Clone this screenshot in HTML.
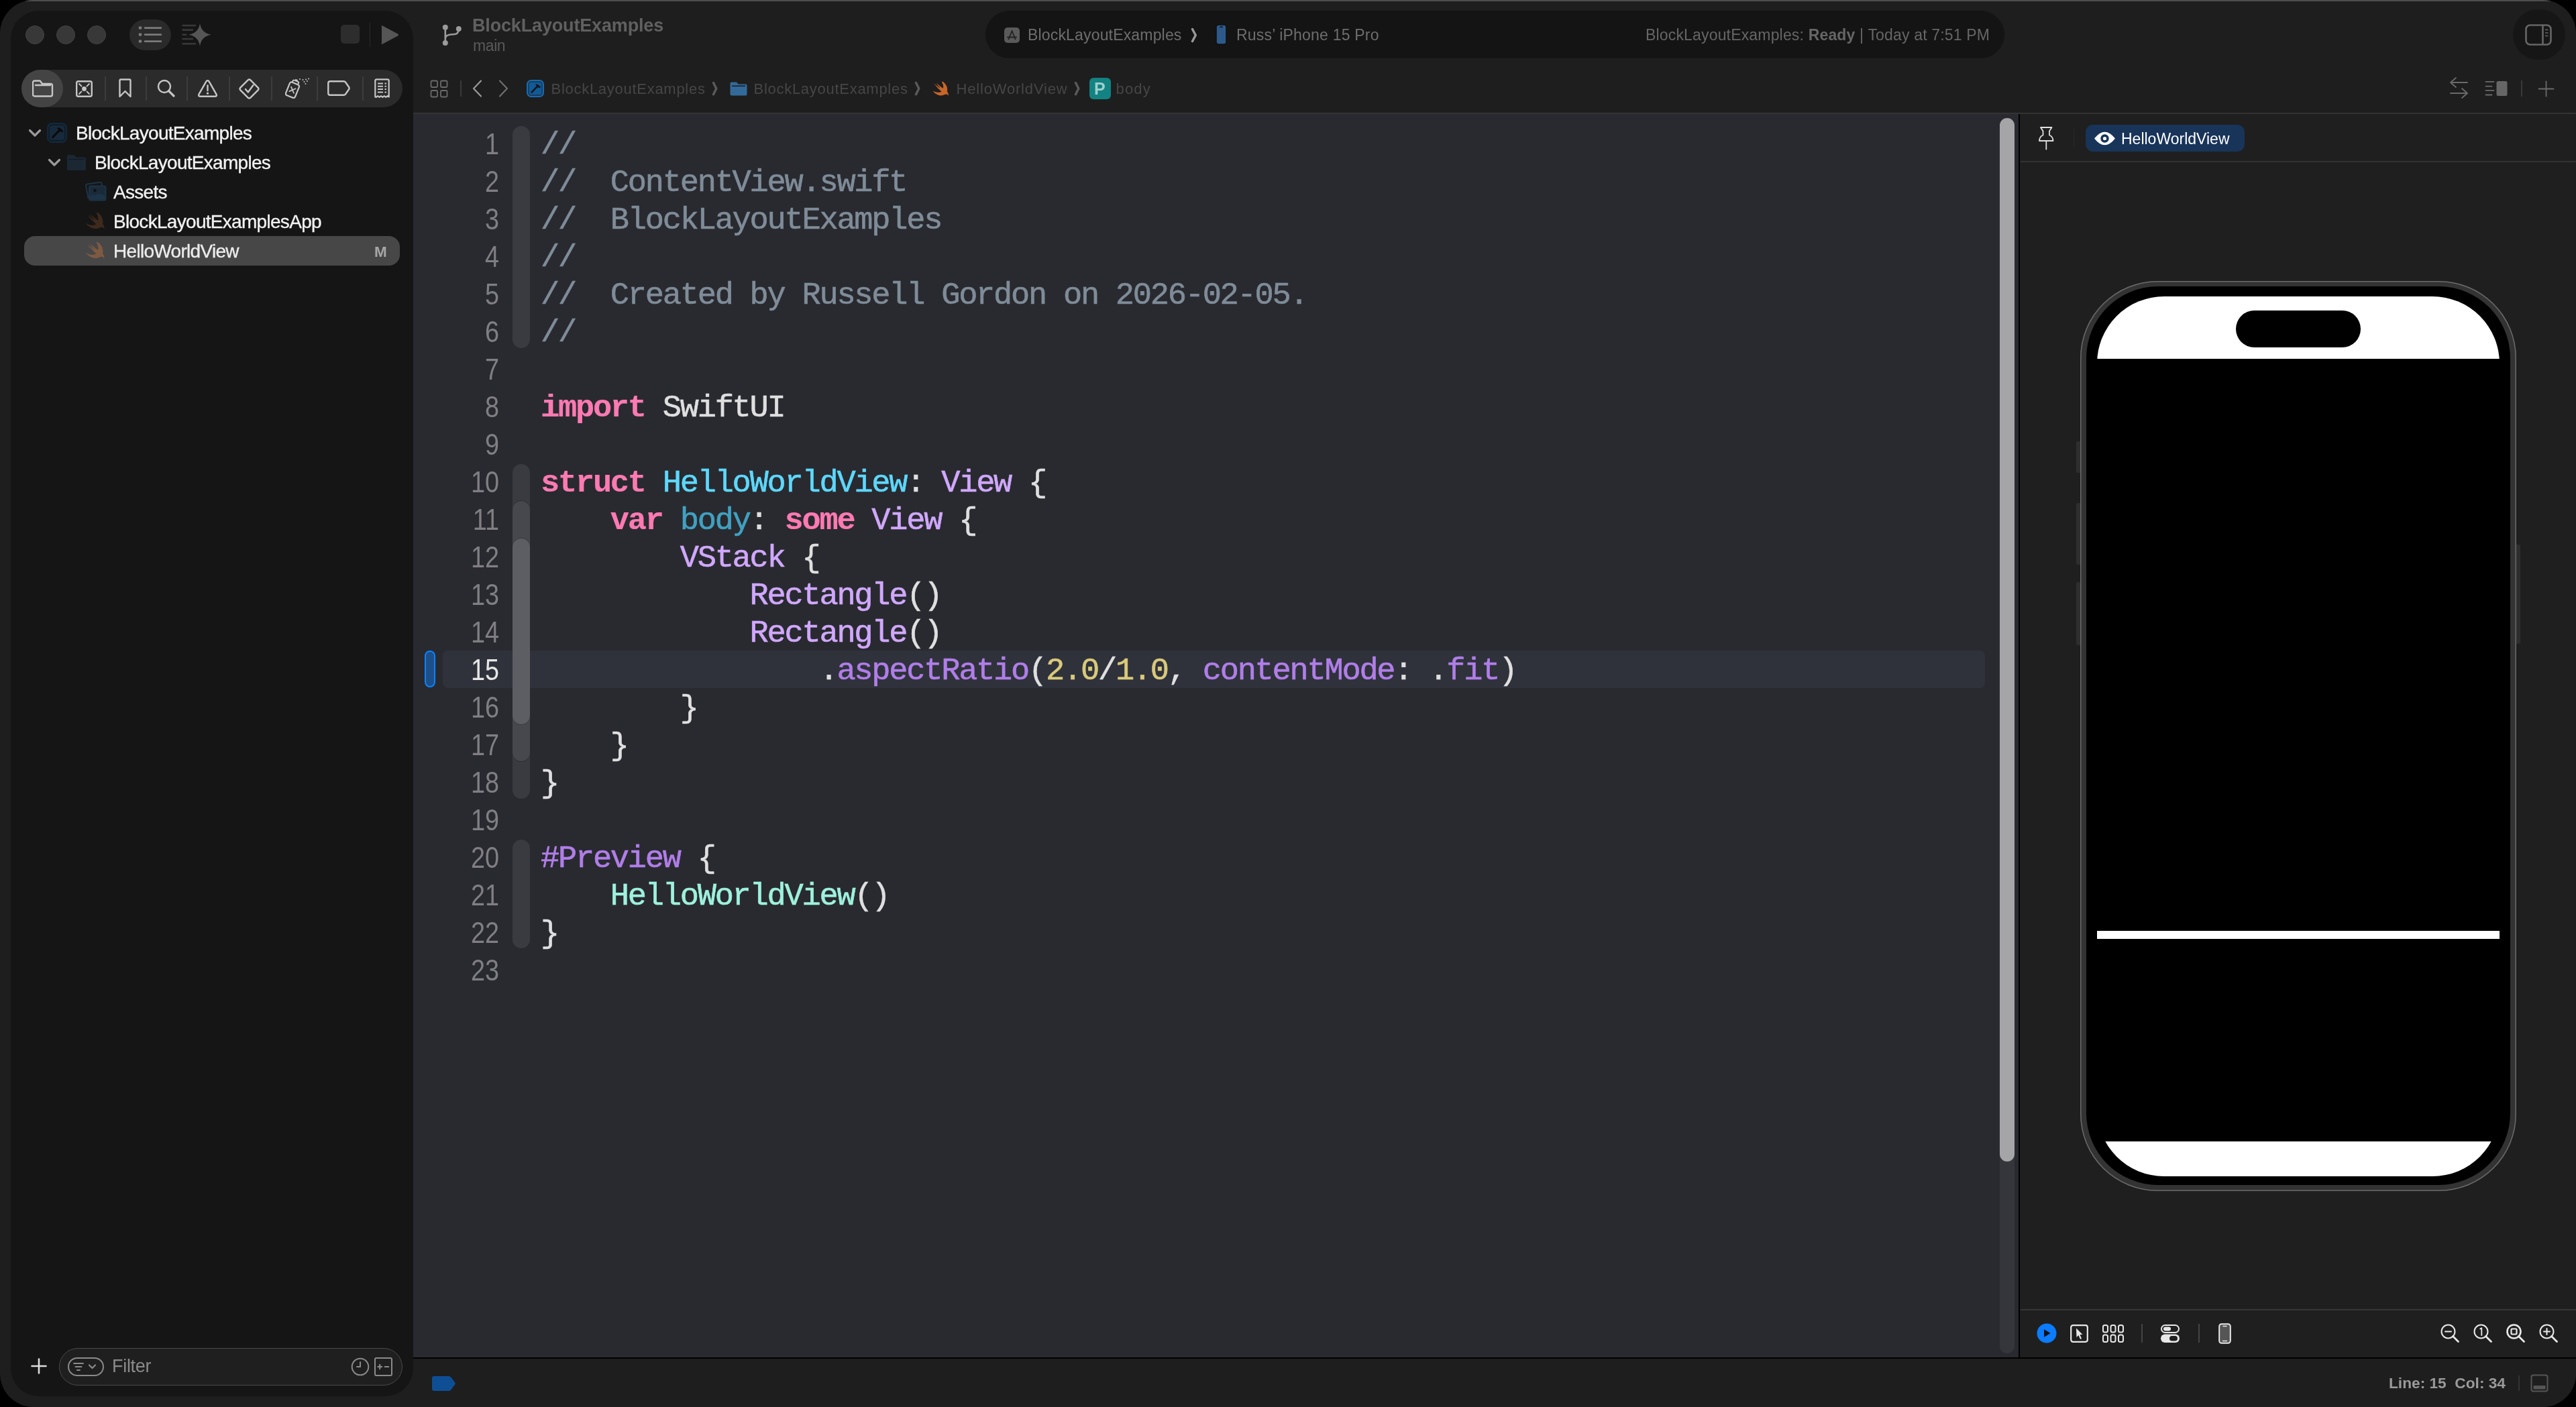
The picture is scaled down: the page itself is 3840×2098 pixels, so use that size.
<!DOCTYPE html>
<html><head><meta charset="utf-8">
<style>
*{margin:0;padding:0;box-sizing:border-box}
html,body{width:3840px;height:2098px;overflow:hidden;background:#000}
body{font-family:"Liberation Sans",sans-serif;position:relative}
.a{position:absolute}
#win{position:absolute;left:0;top:0;width:3840px;height:2098px;border-radius:50px;background:#1e1e1e;overflow:hidden;will-change:transform}
#topline{left:0;top:0;width:3840px;height:2px;background:#4d4d4d}
#side{left:16px;top:16px;width:600px;height:2066px;border-radius:42px;background:#151515}
.tl{width:28px;height:28px;border-radius:50%;background:#383838;border:1px solid #444;top:38px}
#navbar{left:32px;top:104px;width:568px;height:56px;border-radius:28px;background:#2b2b2b}
#navsel{left:32px;top:104px;width:62px;height:56px;border-radius:28px;background:#444}
.nsep{top:114px;width:2px;height:36px;background:#3c3c3c}
.row{left:24px;height:44px;font-size:26.7px;color:#f2f2f2;white-space:nowrap}
#editor{left:616px;top:170px;width:2393px;height:1854px;background:#292a30;overflow:hidden}
#tbline{left:616px;top:168px;width:3224px;height:2px;background:#333}
#status{left:616px;top:2026px;width:3224px;height:72px;background:#1e1e1e}
#botline{left:616px;top:2024px;width:3224px;height:2px;background:#000}
#preview{left:3011px;top:170px;width:828px;height:1854px;background:#1f1f1f}
#vsep{left:3009px;top:170px;width:2px;height:1854px;background:#000}
.code{font-family:"Liberation Mono",monospace;font-size:47px;letter-spacing:-2.24px;white-space:pre;color:#dfdfe0;-webkit-text-stroke:0.6px currentColor}
.ln{font-family:"Liberation Sans",sans-serif;font-size:43.5px;color:#7f7f83;text-align:right;width:120px;left:624px;margin-top:-2px;transform:scaleX(0.87);transform-origin:100% 50%}
.k{color:#ff7ab2;font-weight:bold;-webkit-text-stroke:0.2px currentColor}
.t{color:#d0a8ff}
.td{color:#5dd8ff}
.od{color:#41a1c0}
.fn{color:#b07ee8}
.num{color:#d9c97c}
.cm{color:#7f8c98}
.pc{color:#9ef1dd}
</style></head><body>
<div id="win">
  <div class="a" id="topline"></div>
  <!-- Sidebar -->
  <div class="a" id="side"></div>
  <div class="a tl" style="left:38px"></div>
  <div class="a tl" style="left:84px"></div>
  <div class="a tl" style="left:130px"></div>
  <div class="a" style="left:193px;top:29px;width:62px;height:46px;border-radius:23px;background:#2a2a2a"></div>
  <div class="a" style="left:508px;top:37px;width:28px;height:28px;border-radius:5px;background:#2d2d2d"></div>
  <div class="a" style="left:551px;top:34px;width:1px;height:36px;background:#2a2a2a"></div>
  <svg class="a" style="left:566px;top:36px" width="30" height="32" viewBox="0 0 30 32"><path d="M3 3 Q2 1.5 4 2.3 L27 14.5 Q29 16 27 17.5 L4 29.7 Q2 30.5 3 29 Z" fill="#555"/></svg>
  <div class="a" id="navbar"></div>
  <div class="a" id="navsel"></div>
  <div class="a nsep" style="left:156px"></div>
  <div class="a nsep" style="left:217px"></div>
  <div class="a nsep" style="left:278px"></div>
  <div class="a nsep" style="left:341px"></div>
  <div class="a nsep" style="left:404px"></div>
  <div class="a nsep" style="left:472px"></div>
  <div class="a nsep" style="left:540px"></div>


  <!-- sidebar toolbar icons -->
  <svg class="a" style="left:205px;top:38px" width="38" height="28" viewBox="0 0 38 28"><g fill="#7a7a7a"><circle cx="4" cy="3.6" r="2.4"/><circle cx="4" cy="13.6" r="2.4"/><circle cx="4" cy="23.6" r="2.4"/></g><g stroke="#7a7a7a" stroke-width="2.6" stroke-linecap="round"><path d="M11 3.6H35M11 13.6H35M11 23.6H35"/></g></svg>
  <svg class="a" style="left:270px;top:33px" width="48" height="38" viewBox="0 0 48 38"><g stroke="#383838" stroke-width="2.6" stroke-linecap="round"><path d="M2.5 5H21M2.5 11.6H17M2.5 18.8H7.5M2.5 25H17M2.5 32.2H21"/></g><path d="M28 1.8Q30 16.3 45 18.8Q30 21.3 28 35.8Q26 21.3 11 18.8Q26 16.3 28 1.8Z" fill="#555"/></svg>
  <!-- nav icons -->
  <svg class="a" style="left:48px;top:119px" width="32" height="26" viewBox="0 0 32 26"><g fill="none" stroke="#c6c6c6" stroke-width="2.4" stroke-linejoin="round"><path d="M3.5 24.5H27.5A2.5 2.5 0 0 0 30 22V8.5A2.5 2.5 0 0 0 27.5 6H15L12.3 2.2A1.5 1.5 0 0 0 11 1.5H3.5A2.5 2.5 0 0 0 1 4V22A2.5 2.5 0 0 0 3.5 24.5Z"/><path d="M5 8H27" stroke-linecap="round"/></g></svg>
  <svg class="a" style="left:113px;top:120px" width="25" height="25" viewBox="0 0 25 25"><rect x="1.2" y="1.2" width="22.6" height="22.6" rx="2.5" fill="none" stroke="#c6c6c6" stroke-width="2.4"/><circle cx="12.5" cy="12.5" r="3.4" fill="#c6c6c6"/><g stroke="#c6c6c6" stroke-width="1.8" stroke-linecap="round"><path d="M5 5L8.5 8.5M20 5L16.5 8.5M5 20L8.5 16.5M20 20L16.5 16.5"/></g></svg>
  <svg class="a" style="left:177px;top:117px" width="19" height="29" viewBox="0 0 19 29"><path d="M3 1.5H16A1.5 1.5 0 0 1 17.5 3V27L9.5 19L1.5 27V3A1.5 1.5 0 0 1 3 1.5Z" fill="none" stroke="#c6c6c6" stroke-width="2.4" stroke-linejoin="round"/></svg>
  <svg class="a" style="left:234px;top:118px" width="27" height="27" viewBox="0 0 27 27"><circle cx="11" cy="11" r="9" fill="none" stroke="#c6c6c6" stroke-width="2.4"/><path d="M17.5 17.5L25 25" stroke="#c6c6c6" stroke-width="3.2" stroke-linecap="round"/></svg>
  <svg class="a" style="left:295px;top:119px" width="29" height="26" viewBox="0 0 29 26"><path d="M12.3 2.6Q14.5 -0.6 16.7 2.6L27.4 21.4Q29 24.8 25 24.8H4Q0 24.8 1.6 21.4Z" fill="none" stroke="#c6c6c6" stroke-width="2.4" stroke-linejoin="round"/><path d="M14.5 8.5V16" stroke="#c6c6c6" stroke-width="2.4" stroke-linecap="round"/><circle cx="14.5" cy="20.2" r="1.6" fill="#c6c6c6"/></svg>
  <svg class="a" style="left:356px;top:117px" width="31" height="31" viewBox="0 0 31 31"><path d="M13.6 2.4Q15.5 0.7 17.4 2.4L28.6 13.6Q30.3 15.5 28.6 17.4L17.4 28.6Q15.5 30.3 13.6 28.6L2.4 17.4Q0.7 15.5 2.4 13.6Z" fill="none" stroke="#c6c6c6" stroke-width="2.4"/><path d="M10 16L13.8 20.5L21.5 10" fill="none" stroke="#c6c6c6" stroke-width="2.4" stroke-linecap="round" stroke-linejoin="round"/></svg>
  <svg class="a" style="left:425px;top:115px" width="37" height="32" viewBox="0 0 37 32"><g transform="rotate(22 12 18)"><rect x="4" y="9" width="15" height="21" rx="3" fill="none" stroke="#c6c6c6" stroke-width="2.2"/><path d="M7 9V6.5Q7 5 8.5 5H14.5Q16 5 16 6.5V9" fill="none" stroke="#c6c6c6" stroke-width="2"/><path d="M9.5 3.5H13.5" stroke="#c6c6c6" stroke-width="2"/><path d="M8 16L15 23M15 16L8 23" stroke="#c6c6c6" stroke-width="1.8" stroke-linecap="round"/></g><g fill="#c6c6c6"><circle cx="22" cy="3" r="1"/><circle cx="26.5" cy="4" r="1"/><circle cx="31" cy="3.5" r="1"/><circle cx="35" cy="2.5" r="1"/><circle cx="28.5" cy="7" r="1"/><circle cx="33" cy="6" r="1"/><circle cx="30.5" cy="10" r="1"/></g></svg>
  <svg class="a" style="left:488px;top:120px" width="34" height="23" viewBox="0 0 34 23"><path d="M4 1.3H24.5Q26 1.3 27 2.5L32.2 10Q33 11.5 32.2 13L27 20.5Q26 21.7 24.5 21.7H4Q1.3 21.7 1.3 19V4Q1.3 1.3 4 1.3Z" fill="none" stroke="#c6c6c6" stroke-width="2.4" stroke-linejoin="round"/></svg>
  <svg class="a" style="left:558px;top:117px" width="23" height="30" viewBox="0 0 23 30"><path d="M1.3 27.5V3.5Q1.3 1.3 3.5 1.3H19.5Q21.7 1.3 21.7 3.5V27.5L19.6 26.2L17.2 27.8L14.8 26.2L12.4 27.8L10 26.2L7.6 27.8L5.2 26.2L2.8 27.8Z" fill="none" stroke="#c6c6c6" stroke-width="2.2" stroke-linejoin="round"/><g stroke="#c6c6c6" stroke-width="2"><path d="M5 7.5H13M5 11.8H13M5 16.1H13M5 20.4H13M15.5 7.5H18M15.5 11.8H18M15.5 16.1H18M15.5 20.4H18"/></g></svg>

  <!-- tree -->
  <div class="a" style="left:36px;top:352px;width:560px;height:44px;border-radius:16px;background:#474747"></div>
  <svg class="a" style="left:42px;top:192px" width="20" height="13" viewBox="0 0 20 13"><path d="M2.5 2.5L10 10L17.5 2.5" fill="none" stroke="#9a9a9a" stroke-width="3.2" stroke-linecap="round" stroke-linejoin="round"/></svg>
  <svg class="a" style="left:71px;top:236px" width="20" height="13" viewBox="0 0 20 13"><path d="M2.5 2.5L10 10L17.5 2.5" fill="none" stroke="#9a9a9a" stroke-width="3.2" stroke-linecap="round" stroke-linejoin="round"/></svg>
  <svg class="a" style="left:70px;top:183px" width="30" height="30" viewBox="0 0 30 30"><rect x="1.3" y="1.3" width="27.4" height="27.4" rx="6.5" fill="#10171e" stroke="#13283d" stroke-width="2.6"/><rect x="3.9" y="3.9" width="22.2" height="22.2" rx="3.8" fill="#172a3c"/><path d="M8.6 21.6L18 11.8" stroke="#0b0b0b" stroke-width="3" stroke-linecap="round"/><path d="M14.6 8Q17.6 6.4 20.4 8.6L24.6 12.6L22.7 14.7L20.4 12.8L17.8 14.7L15.7 12.3L17.6 10.7Q16.4 9 14.6 8Z" fill="#0b0b0b"/></svg>
  <svg class="a" style="left:99px;top:230px" width="30" height="25" viewBox="0 0 30 25"><path d="M3 24H27Q29 24 29 22V6.5Q29 4.5 27 4.5H14.5L12 1.5Q11.5 1 10.5 1H3Q1 1 1 3V22Q1 24 3 24Z" fill="#1b2834"/><path d="M4 7.5H26" stroke="#111a22" stroke-width="1.6" stroke-linecap="round"/></svg>
  <svg class="a" style="left:125px;top:271px" width="34" height="29" viewBox="0 0 34 29"><path d="M6.5 25L3.2 6.3Q2.8 4 5 3.6L24 0.8Q26.2 0.6 26.6 2.8L27 6" fill="none" stroke="#1d3347" stroke-width="2"/><rect x="8" y="6.5" width="24.5" height="21" rx="2.6" fill="#1a2a38" stroke="#1d3347" stroke-width="2"/><circle cx="16.5" cy="13" r="2.3" fill="#111"/><path d="M9 26.5V22Q13 17.5 17 20.5Q22 15.5 31.5 21V26.5Z" fill="#1d3347"/></svg>
  <svg class="a" style="left:127px;top:316px" width="29" height="27" viewBox="2.5 3.2 18 17.6"><path fill="#3d2a1c" d="M13.543 3.41c4.114 2.47 6.545 7.162 5.549 11.131-.024.093-.05.181-.076.272l.002.001c2.062 2.538 1.5 5.258 1.236 4.745-1.072-2.086-3.066-1.568-4.088-1.043a6.803 6.803 0 0 1-.281.158l-.02.012-.002.002c-2.115 1.123-4.957 1.205-7.812-.022a12.568 12.568 0 0 1-5.64-4.838c.649.48 1.350.902 2.097 1.252 3.019 1.414 6.051 1.311 8.197-.002C9.651 12.73 7.101 9.670 5.146 7.191a10.628 10.628 0 0 1-1.005-1.384c2.340 2.142 6.038 4.830 7.365 5.576C8.690 8.408 6.208 4.775 7.353 5.700c3.490 3.508 6.739 5.503 6.739 5.503.107.06.19.11.257.154.07-.178.131-.36.18-.547.539-1.970-.07-4.218-1.420-6.043z"/></svg>
  <svg class="a" style="left:127px;top:360px" width="29" height="27" viewBox="2.5 3.2 18 17.6"><path fill="#7d5a43" d="M13.543 3.41c4.114 2.47 6.545 7.162 5.549 11.131-.024.093-.05.181-.076.272l.002.001c2.062 2.538 1.5 5.258 1.236 4.745-1.072-2.086-3.066-1.568-4.088-1.043a6.803 6.803 0 0 1-.281.158l-.02.012-.002.002c-2.115 1.123-4.957 1.205-7.812-.022a12.568 12.568 0 0 1-5.64-4.838c.649.48 1.350.902 2.097 1.252 3.019 1.414 6.051 1.311 8.197-.002C9.651 12.73 7.101 9.670 5.146 7.191a10.628 10.628 0 0 1-1.005-1.384c2.340 2.142 6.038 4.830 7.365 5.576C8.690 8.408 6.208 4.775 7.353 5.700c3.490 3.508 6.739 5.503 6.739 5.503.107.06.19.11.257.154.07-.178.131-.36.18-.547.539-1.970-.07-4.218-1.420-6.043z"/></svg>
  <div class="a row" style="left:113px;top:184px;line-height:30px;font-size:28px;letter-spacing:-0.7px;-webkit-text-stroke:0.35px currentColor">BlockLayoutExamples</div>
  <div class="a row" style="left:141px;top:228px;line-height:30px;font-size:28px;letter-spacing:-0.7px;-webkit-text-stroke:0.35px currentColor">BlockLayoutExamples</div>
  <div class="a row" style="left:169px;top:272px;line-height:30px;font-size:28px;letter-spacing:-0.7px;-webkit-text-stroke:0.35px currentColor">Assets</div>
  <div class="a row" style="left:169px;top:316px;line-height:30px;font-size:28px;letter-spacing:-0.7px;-webkit-text-stroke:0.35px currentColor">BlockLayoutExamplesApp</div>
  <div class="a row" style="left:169px;top:360px;line-height:30px;font-size:28px;letter-spacing:-0.7px;-webkit-text-stroke:0.35px currentColor;color:#ececec">HelloWorldView</div>
  <div class="a row" style="left:558px;top:364px;line-height:23px;font-size:22.5px;font-weight:bold;color:#a6a6a6">M</div>

  <!-- filter -->
  <svg class="a" style="left:46px;top:2025px" width="24" height="24" viewBox="0 0 24 24"><path d="M12 1.5V22.5M1.5 12H22.5" stroke="#dcdcdc" stroke-width="2.6" stroke-linecap="round"/></svg>
  <div class="a" style="left:88px;top:2010px;width:512px;height:56px;border-radius:28px;background:#1f1f1f;border:1.5px solid #4a4a4a"></div>
  <svg class="a" style="left:101px;top:2024px" width="54" height="28" viewBox="0 0 54 28"><rect x="1" y="1" width="52" height="26" rx="13" fill="none" stroke="#8a8a8a" stroke-width="2"/><g stroke="#8a8a8a" stroke-width="2" stroke-linecap="round"><path d="M9 9H23M11.5 14H20.5M14 19H18"/></g><path d="M32 11.5L36.5 16L41 11.5" fill="none" stroke="#8a8a8a" stroke-width="2.2" stroke-linecap="round" stroke-linejoin="round"/></svg>
  <div class="a" style="left:167px;top:2022px;font-size:27px;line-height:30px;color:#8a8a8a;letter-spacing:-0.3px">Filter</div>
  <svg class="a" style="left:523px;top:2024px" width="28" height="28" viewBox="0 0 28 28"><circle cx="14" cy="14" r="12.3" fill="none" stroke="#8a8a8a" stroke-width="2"/><path d="M14 7V14H9" fill="none" stroke="#8a8a8a" stroke-width="2" stroke-linecap="round" stroke-linejoin="round"/></svg>
  <svg class="a" style="left:558px;top:2024px" width="27" height="28" viewBox="0 0 27 28"><rect x="1" y="1" width="25" height="26" rx="2" fill="none" stroke="#8a8a8a" stroke-width="2"/><path d="M4.5 14H12M8.2 10V18M15 14H22" stroke="#8a8a8a" stroke-width="2"/></svg>

  <!-- Toolbar -->
  <svg class="a" style="left:656px;top:33px" width="36" height="38" viewBox="656 33 36 38"><g fill="#9b9b9b"><circle cx="663.8" cy="40.7" r="4"/><circle cx="683.8" cy="43" r="4"/><circle cx="663.8" cy="64" r="4"/></g><path d="M663.8 40.7V64M663.8 57Q664.5 52 672 51.5L678 51Q683.5 50.5 683.8 43" fill="none" stroke="#9b9b9b" stroke-width="2.6"/></svg>
  <div class="a" style="left:704px;top:21.14px;font-size:27px;line-height:35px;color:#606060;font-weight:700;letter-spacing:-0.16px;white-space:nowrap;">BlockLayoutExamples</div>
  <div class="a" style="left:705px;top:53.03px;font-size:23px;line-height:30px;color:#5a5a5a;font-weight:400;letter-spacing:-0.4px;white-space:nowrap;">main</div>
  <div class="a" style="left:1469px;top:16px;width:1519px;height:71px;border-radius:35.5px;background:#141414"></div>
  <svg class="a" style="left:1497px;top:41px" width="23" height="23" viewBox="0 0 23 23"><rect width="23" height="23" rx="5" fill="#5a5a5a"/><g stroke="#222" stroke-width="1.8" stroke-linecap="round" fill="none"><path d="M11.5 5L6.5 17.5M11.5 5L16.5 17.5M5 14.5H18"/></g></svg>
  <div class="a" style="left:1532px;top:37.03px;font-size:23px;line-height:30px;color:#6e6e6e;font-weight:400;letter-spacing:0.17px;white-space:nowrap;">BlockLayoutExamples</div>
  <svg class="a" style="left:1775px;top:41px" width="11" height="23" viewBox="0 0 11 23"><path d="M2.5 2.5L7.3 11.5L2.5 20.5" fill="none" stroke="#9a9a9a" stroke-width="3.4" stroke-linecap="round" stroke-linejoin="round"/></svg>
  <svg class="a" style="left:1812px;top:36px" width="17" height="31" viewBox="0 0 17 31"><rect x="1" y="1" width="15" height="29" rx="3.5" fill="#2d5a8a" stroke="#111" stroke-width="1.6"/><rect x="6" y="3.5" width="5" height="1.4" rx="0.7" fill="#111"/></svg>
  <div class="a" style="left:1843px;top:37.03px;font-size:23px;line-height:30px;color:#6e6e6e;font-weight:400;letter-spacing:0.2px;white-space:nowrap;">Russ’ iPhone 15 Pro</div>
  <div class="a" style="left:2453px;top:37.03px;font-size:23px;line-height:30px;color:#666666;font-weight:400;letter-spacing:0.17px;white-space:nowrap;">BlockLayoutExamples: <b>Ready</b> | Today at 7:51 PM</div>
  <div class="a" style="left:3746px;top:14px;width:78px;height:75px;border-radius:39px;background:#161616"></div>
  <svg class="a" style="left:3764px;top:36px" width="40" height="32" viewBox="0 0 40 32"><rect x="1.5" y="1.5" width="37" height="29" rx="6" fill="none" stroke="#666" stroke-width="2.6"/><path d="M26.5 1.5V30.5" stroke="#666" stroke-width="2.6"/><path d="M30 8.5H34.5M30 13H34.5M30 17.5H34.5" stroke="#666" stroke-width="1.6"/></svg>
  <svg class="a" style="left:641px;top:119px" width="27" height="27" viewBox="0 0 27 27"><g fill="none" stroke="#6a6a6a" stroke-width="1.8"><rect x="1.5" y="1.5" width="9.5" height="9.5" rx="1.5"/><rect x="16" y="1.5" width="9.5" height="9.5" rx="1.5"/><rect x="1.5" y="16" width="9.5" height="9.5" rx="1.5"/><rect x="16" y="16" width="9.5" height="9.5" rx="1.5"/></g></svg>
  <div class="a" style="left:686px;top:120px;width:2px;height:24px;background:#3a3a3a"></div>
  <svg class="a" style="left:703px;top:118px" width="17" height="28" viewBox="0 0 17 28"><path d="M14 2.5L3 14L14 25.5" fill="none" stroke="#9a9a9a" stroke-width="2.2" stroke-linecap="round" stroke-linejoin="round"/></svg>
  <svg class="a" style="left:742px;top:118px" width="17" height="28" viewBox="0 0 17 28"><path d="M3 2.5L14 14L3 25.5" fill="none" stroke="#6e6e6e" stroke-width="2.2" stroke-linecap="round" stroke-linejoin="round"/></svg>
  <svg class="a" style="left:785px;top:119px" width="26" height="26" viewBox="0 0 26 26"><rect x="1.15" y="1.15" width="23.7" height="23.7" rx="5.5" fill="#1b2733" stroke="#1a6bb0" stroke-width="2.3"/><rect x="3.4" y="3.4" width="19.2" height="19.2" rx="3.3" fill="#115a98"/><path d="M7.6 18.6L15.6 10.2" stroke="#161616" stroke-width="2.6" stroke-linecap="round"/><path d="M12.6 7Q15.2 5.6 17.6 7.4L21.2 10.8L19.6 12.6L17.6 11L15.4 12.6L13.6 10.6L15.2 9.2Q14.2 7.8 12.6 7Z" fill="#161616"/></svg>
  <div class="a" style="left:821.5px;top:117.93px;font-size:22px;line-height:30px;color:#464646;font-weight:400;letter-spacing:0.72px;white-space:nowrap;">BlockLayoutExamples</div>
  <svg class="a" style="left:1061px;top:121px" width="10" height="22" viewBox="0 0 10 22"><path d="M2.5 2.5L6.8 11L2.5 19.8" fill="none" stroke="#5a5a5a" stroke-width="3.4" stroke-linecap="round" stroke-linejoin="round"/></svg>
  <svg class="a" style="left:1088px;top:122px" width="26" height="21" viewBox="0 0 26 21"><path d="M2.5 20.5H23.5Q25.5 20.5 25.5 18.5V5.5Q25.5 3.5 23.5 3.5H12.5L10.5 1Q10 0.5 9 0.5H2.5Q0.5 0.5 0.5 2.5V18.5Q0.5 20.5 2.5 20.5Z" fill="#336a9a"/><path d="M3.5 6.2H22.5" stroke="#1a1a1a" stroke-width="1.4" stroke-linecap="round"/></svg>
  <div class="a" style="left:1123.5px;top:117.93px;font-size:22px;line-height:30px;color:#464646;font-weight:400;letter-spacing:0.72px;white-space:nowrap;">BlockLayoutExamples</div>
  <svg class="a" style="left:1363px;top:121px" width="10" height="22" viewBox="0 0 10 22"><path d="M2.5 2.5L6.8 11L2.5 19.8" fill="none" stroke="#5a5a5a" stroke-width="3.4" stroke-linecap="round" stroke-linejoin="round"/></svg>
  <svg class="a" style="left:1389px;top:121px" width="26" height="23" viewBox="2.5 3.2 18 17.6"><path fill="#c8662a" d="M13.543 3.41c4.114 2.47 6.545 7.162 5.549 11.131-.024.093-.05.181-.076.272l.002.001c2.062 2.538 1.5 5.258 1.236 4.745-1.072-2.086-3.066-1.568-4.088-1.043a6.803 6.803 0 0 1-.281.158l-.02.012-.002.002c-2.115 1.123-4.957 1.205-7.812-.022a12.568 12.568 0 0 1-5.64-4.838c.649.48 1.350.902 2.097 1.252 3.019 1.414 6.051 1.311 8.197-.002C9.651 12.73 7.101 9.670 5.146 7.191a10.628 10.628 0 0 1-1.005-1.384c2.340 2.142 6.038 4.830 7.365 5.576C8.690 8.408 6.208 4.775 7.353 5.700c3.490 3.508 6.739 5.503 6.739 5.503.107.06.19.11.257.154.07-.178.131-.36.18-.547.539-1.970-.07-4.218-1.420-6.043z"/></svg>
  <div class="a" style="left:1425.5px;top:117.93px;font-size:22px;line-height:30px;color:#464646;font-weight:400;letter-spacing:0.82px;white-space:nowrap;">HelloWorldView</div>
  <svg class="a" style="left:1601px;top:121px" width="10" height="22" viewBox="0 0 10 22"><path d="M2.5 2.5L6.8 11L2.5 19.8" fill="none" stroke="#5a5a5a" stroke-width="3.4" stroke-linecap="round" stroke-linejoin="round"/></svg>
  <div class="a" style="left:1624px;top:116px;width:32px;height:32px;border-radius:6px;background:#138282"></div>
  <div class="a" style="left:1631px;top:116.34px;font-size:25px;line-height:32px;color:#9ccfcf;font-weight:700;letter-spacing:0px;white-space:nowrap;">P</div>
  <div class="a" style="left:1663.5px;top:117.93px;font-size:22px;line-height:30px;color:#464646;font-weight:400;letter-spacing:1.2px;white-space:nowrap;">body</div>
  <svg class="a" style="left:3650px;top:114px" width="31" height="36" viewBox="0 0 31 36"><g fill="none" stroke="#6a6a6a" stroke-width="1.8" stroke-linecap="round" stroke-linejoin="round"><path d="M28 9H3M11 2L3 9L11 16"/><path d="M3 25H28M20 18L28 25L20 32"/></g></svg>
  <svg class="a" style="left:3704px;top:120px" width="35" height="24" viewBox="0 0 35 24"><g stroke="#6a6a6a" stroke-width="1.8" stroke-linecap="round"><path d="M1.5 1.9H13.5M1.5 8.6H10.5M1.5 14.9H13.5M1.5 21.5H10.5" /></g><rect x="17.5" y="1" width="16" height="22" rx="2.5" fill="#666"/></svg>
  <div class="a" style="left:3758px;top:120px;width:2px;height:24px;background:#3a3a3a"></div>
  <svg class="a" style="left:3783px;top:120px" width="25" height="25" viewBox="0 0 25 25"><path d="M12.5 1.5V23.5M1.5 12.5H23.5" stroke="#6a6a6a" stroke-width="1.8" stroke-linecap="round"/></svg>
  <div class="a" id="tbline"></div>

  <!-- Editor -->
  <div class="a" id="editor"></div>
  <div class="a" style="left:660px;top:970px;width:2299px;height:56px;border-radius:8px;background:#2f323b"></div>
  <div class="a" style="left:633px;top:970px;width:16px;height:55px;border-radius:8px;background:#1d4f8a;border:2px solid #0a84ff"></div>
  <div class="a" style="left:764px;top:188px;width:26px;height:331px;border-radius:13px;background:#3a3b40"></div>
  <div class="a" style="left:764px;top:692px;width:26px;height:499px;border-radius:13px;background:#3a3b40"></div>
  <div class="a" style="left:764px;top:747px;width:26px;height:388px;border-radius:13px;background:#47484d;box-shadow:0 -1px 0 #2e2f33, 0 1px 0 #2e2f33"></div>
  <div class="a" style="left:764px;top:803px;width:26px;height:277px;border-radius:13px;background:#5d5e63;box-shadow:0 -1px 0 #3a3b40, 0 1px 0 #3a3b40"></div>
  <div class="a" style="left:764px;top:1252px;width:26px;height:162px;border-radius:13px;background:#3a3b40"></div>
  <div class="a" style="left:2981px;top:176px;width:22px;height:1842px;border-radius:11px;background:#35363b"></div>
  <div class="a" style="left:2981px;top:176px;width:22px;height:1556px;border-radius:11px;background:#a5a5a7"></div>
  <div class="a ln" style="top:189px;line-height:56px">1</div>
  <div class="a ln" style="top:245px;line-height:56px">2</div>
  <div class="a ln" style="top:301px;line-height:56px">3</div>
  <div class="a ln" style="top:357px;line-height:56px">4</div>
  <div class="a ln" style="top:413px;line-height:56px">5</div>
  <div class="a ln" style="top:469px;line-height:56px">6</div>
  <div class="a ln" style="top:525px;line-height:56px">7</div>
  <div class="a ln" style="top:581px;line-height:56px">8</div>
  <div class="a ln" style="top:637px;line-height:56px">9</div>
  <div class="a ln" style="top:693px;line-height:56px">10</div>
  <div class="a ln" style="top:749px;line-height:56px">11</div>
  <div class="a ln" style="top:805px;line-height:56px">12</div>
  <div class="a ln" style="top:861px;line-height:56px">13</div>
  <div class="a ln" style="top:917px;line-height:56px">14</div>
  <div class="a ln" style="top:973px;line-height:56px;color:#e6e6e6">15</div>
  <div class="a ln" style="top:1029px;line-height:56px">16</div>
  <div class="a ln" style="top:1085px;line-height:56px">17</div>
  <div class="a ln" style="top:1141px;line-height:56px">18</div>
  <div class="a ln" style="top:1197px;line-height:56px">19</div>
  <div class="a ln" style="top:1253px;line-height:56px">20</div>
  <div class="a ln" style="top:1309px;line-height:56px">21</div>
  <div class="a ln" style="top:1365px;line-height:56px">22</div>
  <div class="a ln" style="top:1421px;line-height:56px">23</div>
  <div class="a code" id="codeblk" style="left:806px;top:189px;line-height:56px"><span class="cm">//</span>
<span class="cm">//  ContentView.swift</span>
<span class="cm">//  BlockLayoutExamples</span>
<span class="cm">//</span>
<span class="cm">//  Created by Russell Gordon on 2026-02-05.</span>
<span class="cm">//</span>

<span class="k">import</span> SwiftUI

<span class="k">struct</span> <span class="td">HelloWorldView</span>: <span class="t">View</span> {
    <span class="k">var</span> <span class="od">body</span>: <span class="k">some</span> <span class="t">View</span> {
        <span class="t">VStack</span> {
            <span class="t">Rectangle</span>()
            <span class="t">Rectangle</span>()
                .<span class="fn">aspectRatio</span>(<span class="num">2.0</span>/<span class="num">1.0</span>, <span class="fn">contentMode</span>: .<span class="fn">fit</span>)
        }
    }
}

<span class="fn">#Preview</span> {
    <span class="pc">HelloWorldView</span>()
}
</div>
  <div class="a" id="preview"></div>
  <div class="a" id="vsep"></div>
  <div class="a" style="left:3012px;top:240px;width:828px;height:2px;background:#333"></div>
  <svg class="a" style="left:3038px;top:188px" width="25" height="36" viewBox="0 0 25 36"><g fill="none" stroke="#e0e0e0" stroke-width="1.8" stroke-linejoin="round"><path d="M4 2H20.5L17 7.5V13.5Q22.5 16 22.5 22H2Q2 16 7.5 13.5V7.5Z"/></g><path d="M12.3 22V34.5" stroke="#e0e0e0" stroke-width="1.8" stroke-linecap="round"/></svg>
  <div class="a" style="left:3091px;top:192px;width:1px;height:28px;background:#2a2a2a"></div>
  <div class="a" style="left:3109px;top:186px;width:237px;height:40px;border-radius:11px;background:#183459"></div>
  <svg class="a" style="left:3121px;top:196px" width="33" height="21" viewBox="0 0 33 21"><path d="M1 10.5Q16.5 -9 32 10.5Q16.5 30 1 10.5Z" fill="#fff"/><circle cx="16.5" cy="10.5" r="6.2" fill="#183459"/><circle cx="16.5" cy="10.5" r="2.6" fill="#fff"/></svg>
  <div class="a" style="left:3162px;top:192.03px;font-size:23px;line-height:30px;color:#ffffff;font-weight:400;letter-spacing:0px;white-space:nowrap;">HelloWorldView</div>
  <div class="a" style="left:3095px;top:658px;width:8px;height:47px;border-radius:2px;background:#2e2e2e"></div>
  <div class="a" style="left:3095px;top:750px;width:8px;height:92px;border-radius:2px;background:#2e2e2e"></div>
  <div class="a" style="left:3095px;top:868px;width:8px;height:94px;border-radius:2px;background:#2e2e2e"></div>
  <div class="a" style="left:3749px;top:812px;width:8px;height:148px;border-radius:2px;background:#2e2e2e"></div>
  <div class="a" style="left:3101px;top:419px;width:650px;height:1357px;border-radius:115px;background:#333;box-shadow:inset 0 0 0 1.5px #6a6a6a"></div>
  <div class="a" style="left:3110px;top:427px;width:632px;height:1340px;border-radius:107px;background:#000"></div>
  <div class="a" style="left:3126px;top:442px;width:600px;height:1312px;border-radius:100px;background:#000;overflow:hidden"><div class="a" style="left:-2px;top:0;width:604px;height:93px;background:#fff"></div><div class="a" style="left:-2px;top:946px;width:604px;height:12px;background:#fff"></div><div class="a" style="left:-2px;top:1260px;width:604px;height:60px;background:#fff"></div></div>
  <div class="a" style="left:3333px;top:463px;width:186px;height:55px;border-radius:27.5px;background:#000"></div>
  <div class="a" style="left:3012px;top:1952px;width:828px;height:2px;background:#363636"></div>
  <svg class="a" style="left:3036px;top:1973px" width="30" height="30" viewBox="0 0 30 30"><circle cx="15" cy="15" r="14.5" fill="#0b7bff"/><path d="M11 9.2V20.8L20.5 15Z" fill="#111"/></svg>
  <svg class="a" style="left:3086px;top:1975px" width="27" height="27" viewBox="0 0 27 27"><rect x="1.2" y="1.2" width="24.6" height="24.6" rx="3" fill="none" stroke="#e8e8e8" stroke-width="2.2"/><path d="M9 5.5L9.5 19L12.5 16L15 22L17 21L14.5 15H18.5Z" fill="#e8e8e8"/></svg>
  <svg class="a" style="left:3134px;top:1975px" width="32" height="27" viewBox="0 0 32 27"><g fill="none" stroke="#e8e8e8" stroke-width="2"><rect x="1" y="1" width="7" height="10.5" rx="2.5"/><rect x="12.5" y="1" width="7" height="10.5" rx="2.5"/><rect x="24" y="1" width="7" height="10.5" rx="2.5"/><rect x="1" y="15.5" width="7" height="10.5" rx="2.5"/><rect x="12.5" y="15.5" width="7" height="10.5" rx="2.5"/><rect x="24" y="15.5" width="7" height="10.5" rx="2.5"/></g></svg>
  <div class="a" style="left:3192px;top:1974px;width:2px;height:28px;background:#444"></div>
  <svg class="a" style="left:3221px;top:1975px" width="28" height="27" viewBox="0 0 28 27"><rect x="1" y="1" width="26" height="11" rx="5.5" fill="none" stroke="#e8e8e8" stroke-width="2"/><rect x="4" y="3.5" width="11" height="6" rx="3" fill="#e8e8e8"/><rect x="0" y="14.5" width="28" height="12.5" rx="6.25" fill="#e8e8e8"/><rect x="13" y="17" width="12" height="7.5" rx="3.75" fill="#1f1f1f"/></svg>
  <div class="a" style="left:3277px;top:1974px;width:2px;height:28px;background:#444"></div>
  <svg class="a" style="left:3307px;top:1973px" width="19" height="31" viewBox="0 0 19 31"><rect x="1.2" y="1.2" width="16.6" height="28.6" rx="3.5" fill="#555" stroke="#e8e8e8" stroke-width="2"/><path d="M7 4.5H12M6.5 26.5H12.5" stroke="#e8e8e8" stroke-width="1.6" stroke-linecap="round"/></svg>
  <svg class="a" style="left:3638px;top:1974px" width="29" height="29" viewBox="0 0 29 29"><circle cx="11.5" cy="11.5" r="10" fill="none" stroke="#e8e8e8" stroke-width="2"/><path d="M18.5 18.5L26.5 26.5" stroke="#e8e8e8" stroke-width="2.8" stroke-linecap="round"/><path d="M7 11.5H16" stroke="#e8e8e8" stroke-width="2" stroke-linecap="round"/></svg>
  <svg class="a" style="left:3687px;top:1974px" width="29" height="29" viewBox="0 0 29 29"><circle cx="11.5" cy="11.5" r="10" fill="none" stroke="#e8e8e8" stroke-width="2"/><path d="M18.5 18.5L26.5 26.5" stroke="#e8e8e8" stroke-width="2.8" stroke-linecap="round"/><path d="M10.2 7.5L12.3 6.2V17" fill="none" stroke="#e8e8e8" stroke-width="1.8" stroke-linecap="round" stroke-linejoin="round"/></svg>
  <svg class="a" style="left:3736px;top:1974px" width="29" height="29" viewBox="0 0 29 29"><circle cx="11.5" cy="11.5" r="10" fill="none" stroke="#e8e8e8" stroke-width="2.6"/><path d="M18.5 18.5L26.5 26.5" stroke="#e8e8e8" stroke-width="2.8" stroke-linecap="round"/><rect x="7.5" y="7.5" width="8" height="8" rx="1" fill="none" stroke="#e8e8e8" stroke-width="2.2"/></svg>
  <svg class="a" style="left:3785px;top:1974px" width="29" height="29" viewBox="0 0 29 29"><circle cx="11.5" cy="11.5" r="10" fill="none" stroke="#e8e8e8" stroke-width="2"/><path d="M18.5 18.5L26.5 26.5" stroke="#e8e8e8" stroke-width="2.8" stroke-linecap="round"/><path d="M7 11.5H16M11.5 7V16" stroke="#e8e8e8" stroke-width="2" stroke-linecap="round"/></svg>
  <div class="a" id="botline"></div>
  <div class="a" id="status"></div>
  <svg class="a" style="left:643px;top:2051px" width="37" height="24" viewBox="0 0 37 24"><path d="M4 1H26Q28 1 29.2 2.6L35.5 11Q36.3 12 35.5 13L29.2 21.4Q28 23 26 23H4Q1 23 1 20V4Q1 1 4 1Z" fill="#0e4e94"/></svg>
  <div class="a" style="left:3561px;top:2047.13px;font-size:22.7px;line-height:30px;color:#9a9a9a;font-weight:700;letter-spacing:0px;white-space:nowrap;">Line: 15&nbsp;&nbsp;Col: 34</div>
  <div class="a" style="left:3754px;top:2051px;width:2px;height:23px;background:#333"></div>
  <svg class="a" style="left:3772px;top:2049px" width="27" height="27" viewBox="0 0 27 27"><rect x="1.5" y="1.5" width="24" height="24" rx="3" fill="none" stroke="#555" stroke-width="2"/><rect x="4.5" y="17" width="18" height="5.5" rx="1" fill="#555"/></svg>
</div>
</body></html>
